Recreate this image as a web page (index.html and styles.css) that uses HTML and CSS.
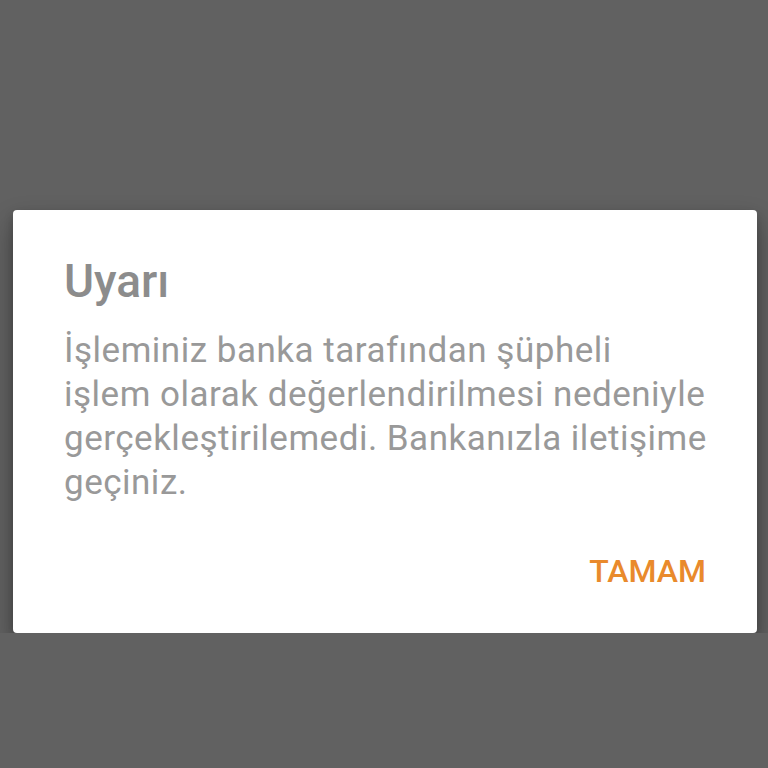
FILE: index.html
```html
<!DOCTYPE html>
<html lang="tr">
<head>
    <meta charset="UTF-8">
    <meta name="viewport" content="width=device-width, initial-scale=1.0">
    <title>Uyarı</title>
    <link rel="stylesheet" href="styles.css">
</head>
<body>
    <div class="dialog">
        <h1 class="dialog-title">Uyarı</h1>
        <p class="dialog-message">İşleminiz banka tarafından şüpheli<br>işlem olarak değerlendirilmesi nedeniyle<br>gerçekleştirilemedi. Bankanızla iletişime<br>geçiniz.</p>
        <div class="dialog-actions">
            <button type="button" class="dialog-button">TAMAM</button>
        </div>
    </div>
</body>
</html>
```

FILE: styles.css
```css
body {
    margin: 0;
    padding: 210px 0 0 13px;
    background-color: #616161;
    font-family: Roboto, "Noto Sans", Arial, sans-serif;
}
.dialog {
    box-sizing: border-box;
    width: 744px;
    background: white;
    border-radius: 4px;
    box-shadow: 0 14px 28px rgba(0,0,0,0.3), 0 4px 10px rgba(0,0,0,0.2);
    padding: 44px 30px 42px 51px;
}
.dialog-title {
    margin: 0;
    font-size: 46px;
    font-weight: 500;
    line-height: 54px;
    color: #8c8c8c;
}
.dialog-message {
    margin: 21px 0 0;
    font-size: 35px;
    line-height: 44px;
    letter-spacing: 0.5px;
    white-space: nowrap;
    color: #999999;
}
.dialog-actions {
    display: flex;
    justify-content: flex-end;
    margin-top: 46px;
    padding-right: 21px;
}
.dialog-button {
    background: none;
    border: none;
    padding: 0;
    font-family: inherit;
    font-size: 32px;
    line-height: 40px;
    font-weight: 500;
    color: #e98a2c;
    cursor: pointer;
}
```
